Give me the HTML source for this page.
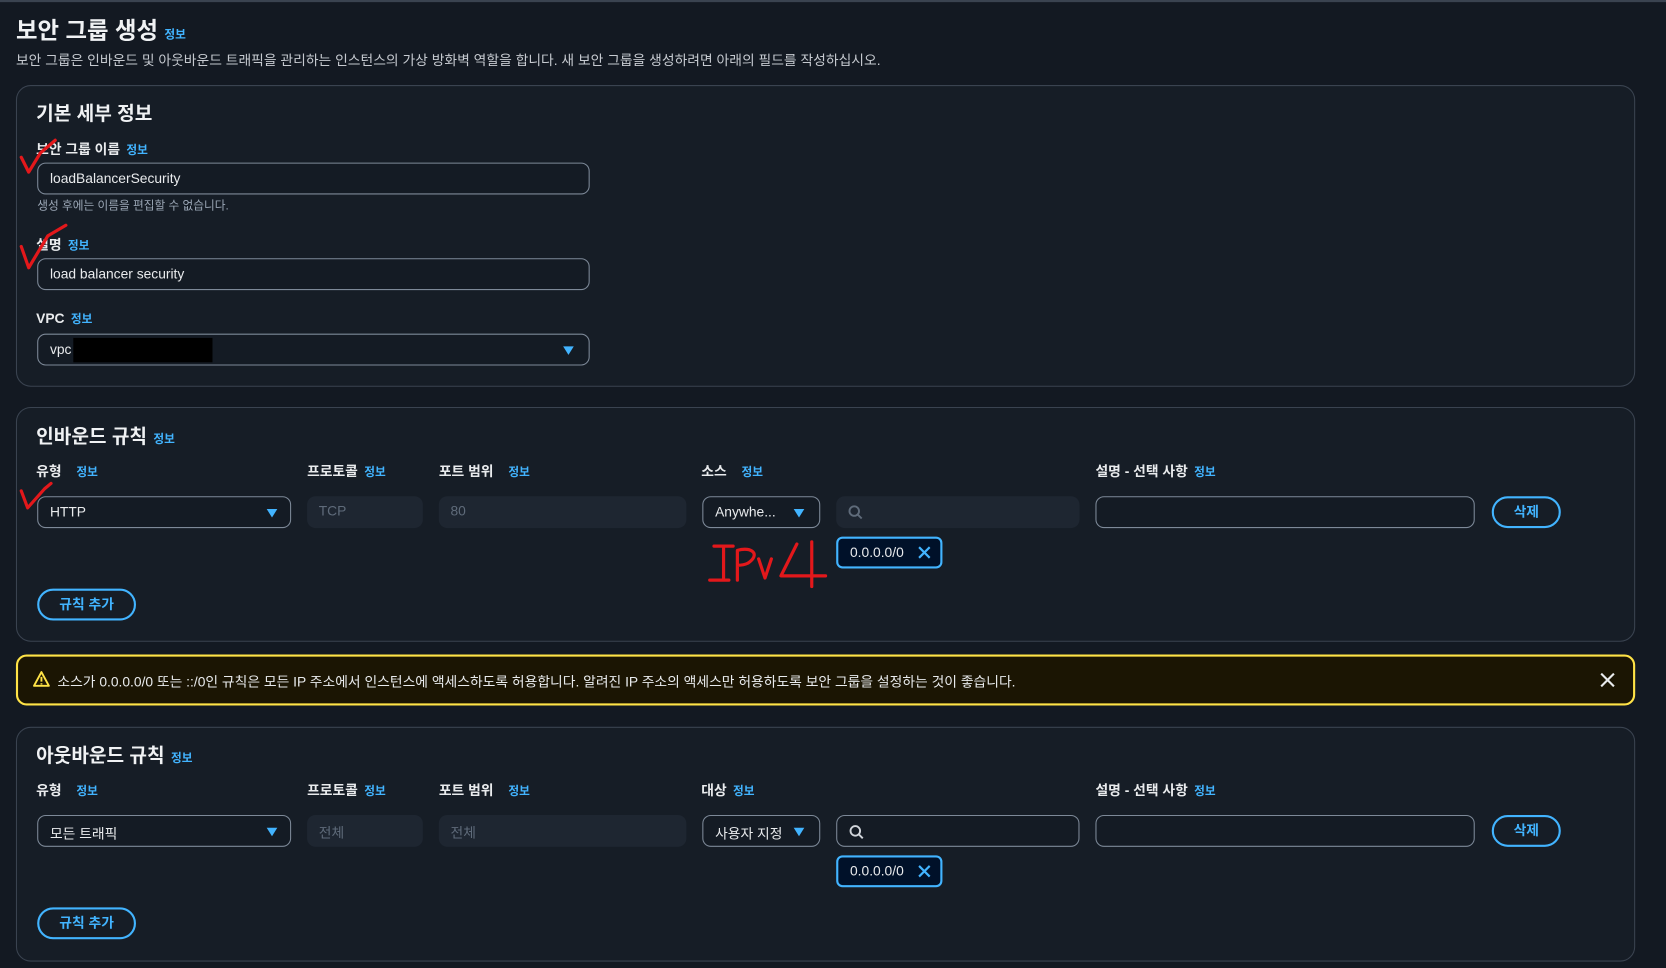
<!DOCTYPE html>
<html><head><meta charset="utf-8"><style>
*{box-sizing:border-box;margin:0;padding:0}
html,body{width:1666px;height:968px;overflow:hidden;background:#131922}
#w{position:absolute;left:0;top:0;width:1568px;height:911px;transform:scale(1.0625);transform-origin:0 0;font-family:"Liberation Sans","Noto Sans CJK KR",sans-serif;color:#d1d5db}
.a{position:absolute;white-space:nowrap}
.i{color:#42b4ff;font-size:11px;font-weight:bold;margin-left:6px}
.panel{position:absolute;left:15px;width:1524px;border:1px solid #3a4350;border-radius:14px;background:#161d26}
.h2{font-size:18px;font-weight:bold;color:#f0f2f4}
.lb{font-size:13px;font-weight:bold;color:#e9ebed}
.in{position:absolute;border:1px solid #7d8998;border-radius:8px;height:30px;font-size:13px;color:#e9ebed;padding:6px 11px;background:#141b24}
.dis{position:absolute;border-radius:8px;height:30px;font-size:13px;color:#5f6b7a;padding:6px 11px;background:#1e2631}
.car{position:absolute;right:12px;top:11px;width:0;height:0;border-left:5px solid transparent;border-right:5px solid transparent;border-top:8px solid #42b4ff}
.btn{position:absolute;border:2px solid #42b4ff;border-radius:16px;height:30px;color:#42b4ff;font-size:13px;font-weight:bold;text-align:center;line-height:26px}
.tok{position:absolute;border:2px solid #42b4ff;border-radius:6px;height:30px;width:100px;background:#001129;color:#e9ebed;font-size:13px;padding:5px 11px}
.x{position:absolute;right:8px;top:6px}
</style></head><body><div id="w">
<div class="a" style="left:0;top:0;width:1568px;height:2px;background:#3a4350"></div>
<div class="a" style="left:15px;top:11px;font-size:22px;font-weight:bold;color:#f0f2f4">보안 그룹 생성<span class="i">정보</span></div>
<div class="a" style="left:15px;top:46px;font-size:13px;color:#c6cad0">보안 그룹은 인바운드 및 아웃바운드 트래픽을 관리하는 인스턴스의 가상 방화벽 역할을 합니다. 새 보안 그룹을 생성하려면 아래의 필드를 작성하십시오.</div>

<div class="panel" style="top:80px;height:284px"></div>
<div class="a h2" style="left:34px;top:93px">기본 세부 정보</div>
<div class="a lb" style="left:34px;top:130px">보안 그룹 이름<span class="i">정보</span></div>
<div class="in" style="left:35px;top:153px;width:520px">loadBalancerSecurity</div>
<div class="a" style="left:35px;top:185px;font-size:11px;color:#9ba7b6">생성 후에는 이름을 편집할 수 없습니다.</div>
<div class="a lb" style="left:34px;top:220px">설명<span class="i">정보</span></div>
<div class="in" style="left:35px;top:243px;width:520px">load balancer security</div>
<div class="a lb" style="left:34px;top:292px">VPC<span class="i">정보</span></div>
<div class="in" style="left:35px;top:314px;width:520px">vpc<div class="car" style="right:14px"></div></div>
<div class="a" style="left:69px;top:318px;width:131px;height:23px;background:#000"></div>

<div class="panel" style="top:383px;height:221px"></div>
<div class="a h2" style="left:34px;top:397px">인바운드 규칙<span class="i">정보</span></div>
<div class="a lb" style="left:34px;top:433px">유형<span class="i" style="margin-left:14px">정보</span></div>
<div class="a lb" style="left:289px;top:433px">프로토콜<span class="i">정보</span></div>
<div class="a lb" style="left:413px;top:433px">포트 범위<span class="i" style="margin-left:14px">정보</span></div>
<div class="a lb" style="left:660px;top:433px">소스<span class="i" style="margin-left:14px">정보</span></div>
<div class="a lb" style="left:1031px;top:433px">설명 - 선택 사항<span class="i">정보</span></div>
<div class="in" style="left:35px;top:467px;width:239px">HTTP<div class="car"></div></div>
<div class="dis" style="left:289px;top:467px;width:109px">TCP</div>
<div class="dis" style="left:413px;top:467px;width:233px">80</div>
<div class="in" style="left:661px;top:467px;width:111px;padding-left:11px">Anywhe...<div class="car" style="right:14px"></div></div>
<div class="dis" style="left:787px;top:467px;width:229px"><svg width="14" height="14" viewBox="0 0 14 14" style="margin-top:2px"><circle cx="6" cy="6" r="4.5" fill="none" stroke="#5f6b7a" stroke-width="1.8"/><path d="M9.5 9.5L13 13" stroke="#5f6b7a" stroke-width="1.8"/></svg></div>
<div class="in" style="left:1031px;top:467px;width:357px"></div>
<div class="btn" style="left:1404px;top:467px;width:65px">삭제</div>
<div class="tok" style="left:787px;top:505px">0.0.0.0/0<svg class="x" width="14" height="14" viewBox="0 0 14 14"><path d="M2 2L12 12M12 2L2 12" stroke="#42b4ff" stroke-width="2"/></svg></div>
<div class="btn" style="left:35px;top:554px;width:93px">규칙 추가</div>

<div class="a" style="left:15px;top:616px;width:1524px;height:48px;border:2px solid #ffe347;border-radius:10px;background:#1b1503"></div>
<svg class="a" style="left:31px;top:631px" width="16" height="16" viewBox="0 0 16 16"><path d="M8 1.5L15 14.5H1Z" fill="none" stroke="#ffe347" stroke-width="1.8" stroke-linejoin="round"/><path d="M8 6v4.5M8 12v1.2" stroke="#ffe347" stroke-width="1.8"/></svg>
<div class="a" style="left:54px;top:631px;font-size:13px;color:#e9ebed">소스가 0.0.0.0/0 또는 ::/0인 규칙은 모든 IP 주소에서 인스턴스에 액세스하도록 허용합니다. 알려진 IP 주소의 액세스만 허용하도록 보안 그룹을 설정하는 것이 좋습니다.</div>
<svg class="a" style="left:1506px;top:633px" width="14" height="14" viewBox="0 0 14 14"><path d="M1 1L13 13M13 1L1 13" stroke="#e9ebed" stroke-width="2"/></svg>

<div class="panel" style="top:684px;height:221px"></div>
<div class="a h2" style="left:34px;top:697px">아웃바운드 규칙<span class="i">정보</span></div>
<div class="a lb" style="left:34px;top:733px">유형<span class="i" style="margin-left:14px">정보</span></div>
<div class="a lb" style="left:289px;top:733px">프로토콜<span class="i">정보</span></div>
<div class="a lb" style="left:413px;top:733px">포트 범위<span class="i" style="margin-left:14px">정보</span></div>
<div class="a lb" style="left:660px;top:733px">대상<span class="i">정보</span></div>
<div class="a lb" style="left:1031px;top:733px">설명 - 선택 사항<span class="i">정보</span></div>
<div class="in" style="left:35px;top:767px;width:239px">모든 트래픽<div class="car"></div></div>
<div class="dis" style="left:289px;top:767px;width:109px">전체</div>
<div class="dis" style="left:413px;top:767px;width:233px">전체</div>
<div class="in" style="left:661px;top:767px;width:111px">사용자 지정<div class="car" style="right:14px"></div></div>
<div class="in" style="left:787px;top:767px;width:229px"><svg width="14" height="14" viewBox="0 0 14 14" style="margin-top:2px"><circle cx="6" cy="6" r="4.5" fill="none" stroke="#d1d5db" stroke-width="1.8"/><path d="M9.5 9.5L13 13" stroke="#d1d5db" stroke-width="1.8"/></svg></div>
<div class="in" style="left:1031px;top:767px;width:357px"></div>
<div class="btn" style="left:1404px;top:767px;width:65px">삭제</div>
<div class="tok" style="left:787px;top:805px">0.0.0.0/0<svg class="x" width="14" height="14" viewBox="0 0 14 14"><path d="M2 2L12 12M12 2L2 12" stroke="#42b4ff" stroke-width="2"/></svg></div>
<div class="btn" style="left:35px;top:854px;width:93px">규칙 추가</div>

<svg class="a" style="left:0;top:0" width="1568" height="911" viewBox="0 0 1568 911" fill="none" stroke="#e3181b" stroke-width="3" stroke-linecap="round" stroke-linejoin="round">
<path d="M20 148L27 162L38 144L52 132"/>
<path d="M20 232L27 252L45 222L62 212"/>
<path d="M20 462L26 478L42 460L48 455"/>
<path d="M672 514h18M681 514v30M668 546h18"/>
<path d="M694 546V518c14-4 22 4 10 12c-4 2-8 2-10 2"/>
<path d="M714 526l6 18l6-18"/>
<path d="M750 512l-15 30h42M764 510v42"/>
</svg>
</div></body></html>
